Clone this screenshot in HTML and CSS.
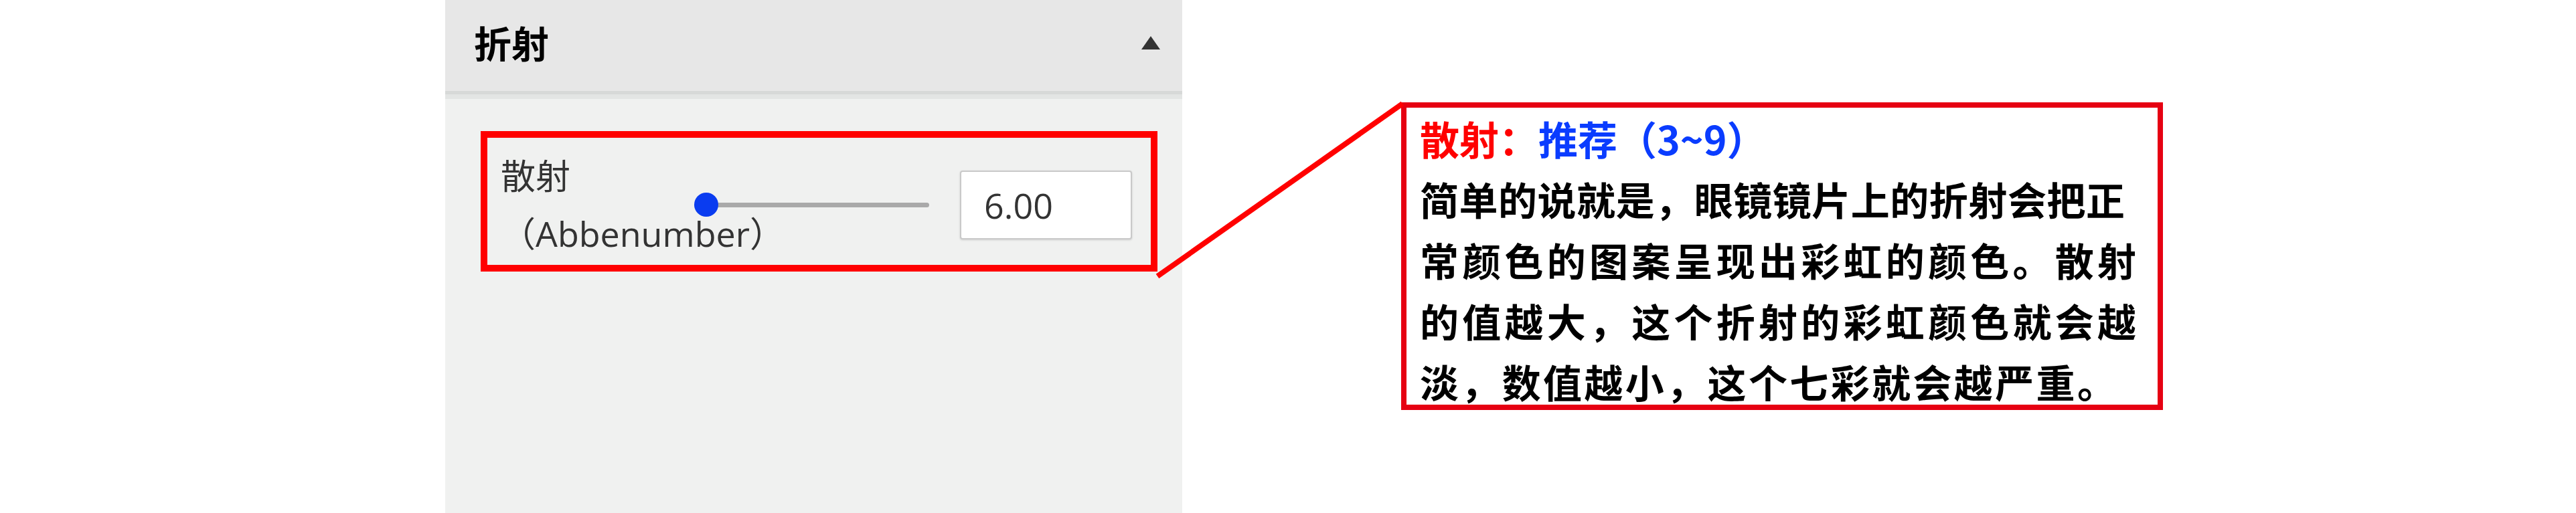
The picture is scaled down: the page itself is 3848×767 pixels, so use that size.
FILE: index.html
```html
<!DOCTYPE html>
<html>
<head>
    <meta charset="UTF-8">
    <title>折射</title>
    <link rel="stylesheet" href="styles.css">
</head>
<body>
<div class="page">
    <!--折射面板-->
    <div class="panel">
        <div class="panel-head">
            <span class="panel-title">折射</span>
            <svg class="caret" width="28" height="20" viewBox="0 0 28 20"><polygon points="14,0 28,20 0,20" fill="#333"/></svg>
        </div>
        <div class="panel-body">
            <div class="mark-box">
                <div class="field-row">
                    <label class="field-label">散射（Abbenumber）</label>
                    <input class="field-range" type="range" min="0" max="100" value="0">
                    <input class="field-value" type="text" value="6.00">
                </div>
            </div>
        </div>
    </div>
    <!--说明-->
    <div class="note-box">
        <div class="note-title"><span class="note-key">散射：</span><span class="note-tip">推荐（3~9）</span></div>
        <div class="note-line short">简单的说就是，眼镜镜片上的折射会把正</div>
        <div class="note-line">常颜色的图案呈现出彩虹的颜色。散射</div>
        <div class="note-line">的值越大，这个折射的彩虹颜色就会越</div>
        <div class="note-line last">淡，数值越小，这个七彩就会越严重。</div>
    </div>
    <!--连接线-->
    <svg class="link-line" width="3848" height="767" viewBox="0 0 3848 767">
        <line x1="1729" y1="413" x2="2095" y2="155" stroke="#ff0000" stroke-width="8"/>
    </svg>
</div>
</body>
</html>
```

FILE: styles.css
```css
* {
    margin: 0;
    padding: 0;
    box-sizing: border-box;
}
body {
    background-color: #fff;
    font-family: "Open Sans", "Noto Sans CJK SC", sans-serif;
}
.page {
    width: 3848px;
    height: 767px;
    position: relative;
    display: flex;
    flex-direction: row;
    align-items: flex-start;
}
.panel {
    width: 1101px;
    height: 767px;
    margin-left: 665px;
    display: flex;
    flex-direction: column;
    background-color: #f0f1f0;
}
.panel-head {
    height: 141px;
    padding: 0 33px 12px 43px;
    background-color: #e7e7e7;
    border-bottom: 5px solid #d7d9d8;
    display: flex;
    align-items: center;
    justify-content: space-between;
}
.panel-title {
    font-family: "Noto Sans CJK SC", sans-serif;
    font-size: 56px;
    font-weight: bold;
    color: #000;
}
.caret {
    margin-top: 4px;
}
.panel-body {
    flex: 1;
    padding: 55px 37px 0 53px;
    background: linear-gradient(#e3e5e4 0, #e3e5e4 7px, #f0f1f0 7px);
}
.mark-box {
    border: 10px solid #ff0000;
    padding: 14px 27px 4px 20px;
}
.field-row {
    display: flex;
    flex-direction: row;
    align-items: center;
}
.field-label {
    width: 289px;
    flex-shrink: 0;
    font-size: 52px;
    line-height: 86px;
    color: #333;
}
.field-range {
    -webkit-appearance: none;
    appearance: none;
    width: 351px;
    height: 36px;
    flex-shrink: 0;
    background: transparent;
    outline: none;
}
.field-range::-webkit-slider-runnable-track {
    height: 7px;
    border-radius: 4px;
    background-color: #a9a9a9;
}
.field-range::-webkit-slider-thumb {
    -webkit-appearance: none;
    width: 36px;
    height: 36px;
    margin-top: -14.5px;
    border-radius: 50%;
    background-color: #0a3cf0;
    border: none;
}
.field-value {
    width: 257px;
    height: 103px;
    margin-left: 46px;
    padding-left: 34px;
    font-family: "Open Sans", sans-serif;
    font-size: 52px;
    color: #333;
    background-color: #fff;
    border: 2px solid #c9c9c9;
    border-radius: 4px;
    box-shadow: 0 1px 3px rgba(0, 0, 0, 0.15);
    outline: none;
}
.note-box {
    width: 1138px;
    height: 460px;
    margin-left: 327px;
    margin-top: 153px;
    padding: 0 12px 0 20px;
    border: 8px solid #e60012;
    font-family: "Noto Sans CJK SC", sans-serif;
    font-size: 58px;
    line-height: 91px;
    font-weight: bold;
    color: #000;
}
.note-title {
    font-size: 59px;
    white-space: nowrap;
}
.note-line {
    width: 1070px;
    text-align: justify;
    text-align-last: justify;
}
.note-line.short {
    width: 1053px;
}
.note-line.last {
    width: 1040px;
}
.note-key {
    color: #ff0000;
}
.note-tip {
    color: #0a3cff;
}
.link-line {
    position: absolute;
    left: 0;
    top: 0;
    pointer-events: none;
}
```
